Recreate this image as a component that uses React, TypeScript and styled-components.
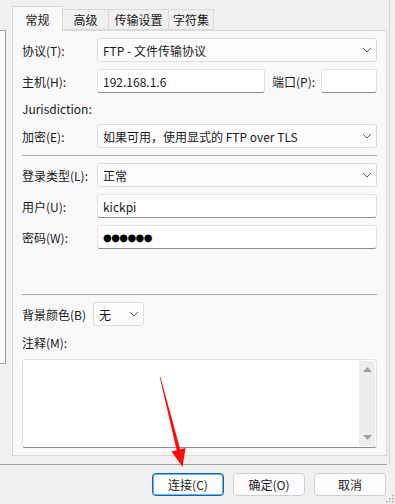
import React from 'react';
import styled, { createGlobalStyle } from 'styled-components';

const GlobalStyle = createGlobalStyle`
  html, body {
    margin: 0;
    padding: 0;
    background: #f0f0f0;
  }
  body {
    font-family: "Noto Sans CJK SC", "Noto Sans", sans-serif;
    font-size: 12px;
    color: #1a1a1a;
  }
`;

const Window = styled.div`
  position: relative;
  width: 395px;
  height: 504px;
  overflow: hidden;
  background: #f0f0f0;
  display: flex;
  flex-direction: column;
`;

const Top = styled.div`
  display: flex;
  height: 464px;
`;

const SiteList = styled.div`
  box-sizing: border-box;
  width: 6px;
  height: 334px;
  margin-top: 30px;
  background: #fbfbfb;
  border: 1px solid #a0a0a0;
  border-left: none;
`;

const Main = styled.div`
  width: 375px;
  margin-left: 6px;
  display: flex;
  flex-direction: column;
`;

const RightEdge = styled.div`
  width: 1px;
  margin-left: 2px;
  background: #d6d6d6;
`;

const TabBar = styled.div`
  display: flex;
  align-items: flex-end;
  height: 30px;
`;

const Tab = styled.div<{ $w: number; $active?: boolean }>`
  box-sizing: border-box;
  width: ${(p) => p.$w}px;
  height: ${(p) => (p.$active ? 25 : 21)}px;
  margin-bottom: ${(p) => (p.$active ? -1 : 0)}px;
  padding-top: ${(p) => (p.$active ? 2 : 1)}px;
  display: flex;
  align-items: center;
  justify-content: center;
  background: ${(p) => (p.$active ? '#f9f9f9' : '#f0f0f0')};
  border: 1px solid #dadada;
  border-bottom: ${(p) => (p.$active ? 'none' : '1px solid #dadada')};
  border-left: ${(p) => (p.$active ? '1px solid #dadada' : 'none')};
  position: relative;
  z-index: ${(p) => (p.$active ? 1 : 0)};
  font-size: 12px;
  line-height: 1;
`;

const Panel = styled.div`
  box-sizing: border-box;
  height: 426px;
  background: #f9f9f9;
  border: 1px solid #dadada;
  padding: 7px 9px 0 9px;
  display: flex;
  flex-direction: column;
`;

const Row = styled.div<{ $mt?: number }>`
  display: flex;
  align-items: center;
  height: 24px;
  margin-top: ${(p) => p.$mt ?? 0}px;
`;

const Label = styled.div<{ $w?: number; $ml?: number }>`
  width: ${(p) => (p.$w ? `${p.$w}px` : 'auto')};
  margin-left: ${(p) => p.$ml ?? 0}px;
  flex-shrink: 0;
  white-space: nowrap;
`;

const TextLine = styled.div<{ $mt: number }>`
  height: 17px;
  line-height: 17px;
  margin-top: ${(p) => p.$mt}px;
`;

const Input = styled.div<{ $w?: number }>`
  box-sizing: border-box;
  height: 24px;
  ${(p) => (p.$w ? `width: ${p.$w}px;` : 'flex: 1;')}
  display: flex;
  align-items: center;
  padding-left: 5px;
  background: #ffffff;
  border: 1px solid #e3e3e3;
  border-bottom: 1px solid #8c8c8c;
  border-radius: 3px;
`;

const Select = styled.div<{ $w?: number }>`
  box-sizing: border-box;
  height: 24px;
  ${(p) => (p.$w ? `width: ${p.$w}px;` : 'flex: 1;')}
  display: flex;
  align-items: center;
  justify-content: space-between;
  padding: 0 4px 0 5px;
  background: #fdfdfd;
  border: 1px solid #dcdcdc;
  border-radius: 3px;
`;

const Dots = styled.span`
  font-family: "DejaVu Sans", sans-serif;
  font-size: 10px;
  letter-spacing: -0.6px;
  color: #000;
`;

const Separator = styled.div<{ $mt: number }>`
  height: 1px;
  margin-top: ${(p) => p.$mt}px;
  background: #a8a8a8;
`;

const Memo = styled.div`
  box-sizing: border-box;
  height: 89px;
  margin-top: 8px;
  background: #ffffff;
  border: 1px solid #e3e3e3;
  border-bottom: 1px solid #8c8c8c;
  border-radius: 3px;
  display: flex;
  justify-content: flex-end;
  padding: 1px 1px 1px 0;
`;

const ScrollTrack = styled.div`
  width: 16px;
  background: #ededed;
  display: flex;
  flex-direction: column;
  justify-content: space-between;
  align-items: center;
  padding: 6px 0;
`;

const BottomLine = styled.div`
  width: 387px;
  height: 1px;
  background: #a0a0a0;
`;

const ButtonBar = styled.div`
  display: flex;
  justify-content: flex-end;
  gap: 9px;
  padding: 8px 9px 0 0;
`;

const Button = styled.div<{ $focus?: boolean }>`
  box-sizing: border-box;
  width: 72px;
  height: 23px;
  display: flex;
  align-items: center;
  justify-content: center;
  background: #fdfdfd;
  border: 1px solid ${(p) => (p.$focus ? '#0067c0' : '#d0d0d0')};
  box-shadow: ${(p) => (p.$focus ? 'inset 0 0 0 0.5px #0067c0' : 'none')};
  border-radius: 4px;
`;

const Overlay = styled.svg`
  position: absolute;
  left: 0;
  top: 0;
  pointer-events: none;
`;

const Grip = styled.svg`
  position: absolute;
  right: 1px;
  bottom: 1px;
`;

const Chevron: React.FC = () => (
  <svg width="10" height="6" viewBox="0 0 10 6">
    <polyline points="1,1 5,5 9,1" fill="none" stroke="#5c5c5c" strokeWidth="1" />
  </svg>
);

const Triangle: React.FC<{ down?: boolean }> = ({ down }) => (
  <svg width="9" height="5" viewBox="0 0 9 5">
    <polygon points={down ? '0,0 9,0 4.5,5' : '0,5 9,5 4.5,0'} fill="#a0a0a0" />
  </svg>
);

const App: React.FC = () => (
  <Window>
    <GlobalStyle />
    <Top>
      <SiteList />
      <Main>
        <TabBar>
          <Tab $w={51} $active>常规</Tab>
          <Tab $w={46}>高级</Tab>
          <Tab $w={60}>传输设置</Tab>
          <Tab $w={45}>字符集</Tab>
        </TabBar>
        <Panel>
          <Row>
            <Label $w={75}>协议(T):</Label>
            <Select>
              <span>FTP - 文件传输协议</span>
              <Chevron />
            </Select>
          </Row>
          <Row $mt={7}>
            <Label $w={75}>主机(H):</Label>
            <Input $w={168}>192.168.1.6</Input>
            <Label $ml={7} $w={49}>端口(P):</Label>
            <Input />
          </Row>
          <TextLine $mt={7}>Jurisdiction:</TextLine>
          <Row $mt={7}>
            <Label $w={75}>加密(E):</Label>
            <Select>
              <span>如果可用，使用显式的 FTP over TLS</span>
              <Chevron />
            </Select>
          </Row>
          <Separator $mt={7} />
          <Row $mt={7}>
            <Label $w={75}>登录类型(L):</Label>
            <Select>
              <span>正常</span>
              <Chevron />
            </Select>
          </Row>
          <Row $mt={7}>
            <Label $w={75}>用户(U):</Label>
            <Input>kickpi</Input>
          </Row>
          <Row $mt={7}>
            <Label $w={75}>密码(W):</Label>
            <Input>
              <Dots>●●●●●●</Dots>
            </Input>
          </Row>
          <Separator $mt={45} />
          <Row $mt={7}>
            <Label $w={71}>背景颜色(B)</Label>
            <Select $w={51}>
              <span>无</span>
              <Chevron />
            </Select>
          </Row>
          <TextLine $mt={8}>注释(M):</TextLine>
          <Memo>
            <ScrollTrack>
              <Triangle />
              <Triangle down />
            </ScrollTrack>
          </Memo>
        </Panel>
      </Main>
      <RightEdge />
    </Top>
    <BottomLine />
    <ButtonBar>
      <Button $focus>连接(C)</Button>
      <Button>确定(O)</Button>
      <Button>取消</Button>
    </ButtonBar>
    <Overlay width="395" height="504" viewBox="0 0 395 504">
      <polygon points="159.7,377 160.4,377 180.3,449.5 176.7,450.5" fill="#ff0a0a" />
      <polygon points="171.5,451.5 185.6,448 182.5,467" fill="#ff0a0a" />
    </Overlay>
    <Grip width="8" height="8" viewBox="0 0 8 8">
      <rect x="6" y="0" width="1.5" height="1.5" fill="#a8a8a8" />
      <rect x="3" y="3" width="1.5" height="1.5" fill="#a8a8a8" />
      <rect x="6" y="3" width="1.5" height="1.5" fill="#a8a8a8" />
      <rect x="0" y="6" width="1.5" height="1.5" fill="#a8a8a8" />
      <rect x="3" y="6" width="1.5" height="1.5" fill="#a8a8a8" />
      <rect x="6" y="6" width="1.5" height="1.5" fill="#a8a8a8" />
    </Grip>
  </Window>
);

export default App;
